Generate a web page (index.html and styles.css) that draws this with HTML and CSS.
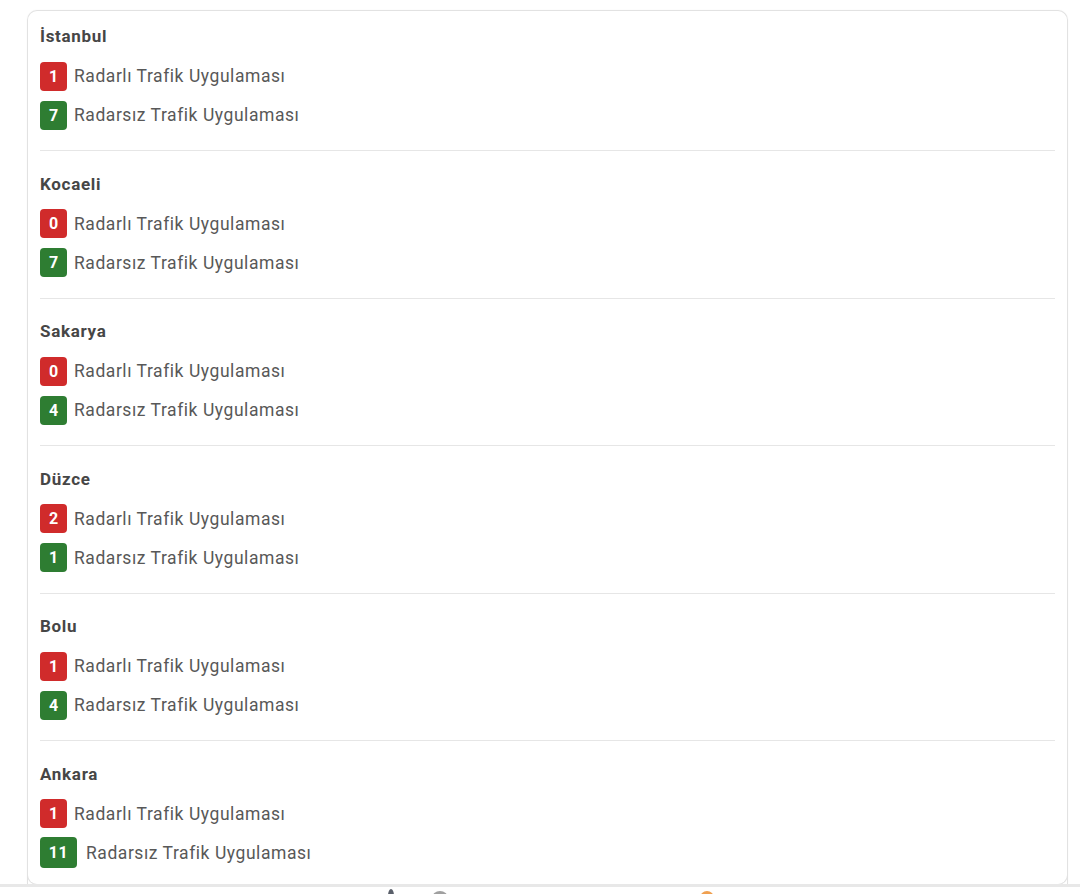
FILE: index.html
```html
<!DOCTYPE html>
<html lang="tr">
<head>
<meta charset="utf-8">
<title>Trafik Uygulamaları</title>
<link rel="stylesheet" href="styles.css">
</head>
<body>
<div class="page">
  <div class="card">
    <section class="city">
      <h3 class="city-name">İstanbul</h3>
      <div class="row"><span class="badge red">1</span><span class="label">Radarlı Trafik Uygulaması</span></div>
      <div class="row"><span class="badge green">7</span><span class="label">Radarsız Trafik Uygulaması</span></div>
    </section>
    <section class="city">
      <h3 class="city-name">Kocaeli</h3>
      <div class="row"><span class="badge red">0</span><span class="label">Radarlı Trafik Uygulaması</span></div>
      <div class="row"><span class="badge green">7</span><span class="label">Radarsız Trafik Uygulaması</span></div>
    </section>
    <section class="city">
      <h3 class="city-name">Sakarya</h3>
      <div class="row"><span class="badge red">0</span><span class="label">Radarlı Trafik Uygulaması</span></div>
      <div class="row"><span class="badge green">4</span><span class="label">Radarsız Trafik Uygulaması</span></div>
    </section>
    <section class="city">
      <h3 class="city-name">Düzce</h3>
      <div class="row"><span class="badge red">2</span><span class="label">Radarlı Trafik Uygulaması</span></div>
      <div class="row"><span class="badge green">1</span><span class="label">Radarsız Trafik Uygulaması</span></div>
    </section>
    <section class="city">
      <h3 class="city-name">Bolu</h3>
      <div class="row"><span class="badge red">1</span><span class="label">Radarlı Trafik Uygulaması</span></div>
      <div class="row"><span class="badge green">4</span><span class="label">Radarsız Trafik Uygulaması</span></div>
    </section>
    <section class="city">
      <h3 class="city-name">Ankara</h3>
      <div class="row"><span class="badge red">1</span><span class="label">Radarlı Trafik Uygulaması</span></div>
      <div class="row"><span class="badge green wide">11</span><span class="label">Radarsız Trafik Uygulaması</span></div>
    </section>
  </div>
</div>
<div class="footer">
  <span class="ficon dark"></span>
  <span class="ficon grey"></span>
  <span class="ficon orange"></span>
</div>
</body>
</html>
```

FILE: styles.css
```css
html, body {
  margin: 0;
  padding: 0;
  background: #ffffff;
}

body {
  font-family: Roboto, "Liberation Sans", Arial, sans-serif;
  color: #555555;
}

.page {
  padding: 10px 12px 0 27px;
}

.card {
  border: 1px solid #e2e2e2;
  border-bottom: none;
  border-radius: 10px 10px 0 0;
  padding: 15px 12px 16px 12px;
  box-shadow: 0 0 2px rgba(0, 0, 0, 0.04);
  position: relative;
}

.card::after {
  content: "";
  position: absolute;
  left: -1px;
  right: -1px;
  bottom: 0;
  height: 10px;
  border: 1px solid #e2e2e2;
  border-top: none;
  border-radius: 0 0 10px 10px;
  transform: translateY(1px);
}

.city {
  padding-bottom: 20px;
  border-bottom: 1px solid #e6e6e6;
  margin-bottom: 22.5px;
}

.city:last-child {
  padding-bottom: 0;
  border-bottom: none;
  margin-bottom: 0;
}

.city-name {
  margin: 0 0 15px 0;
  font-size: 17px;
  line-height: 20px;
  font-weight: 700;
  color: #464646;
  letter-spacing: 0.7px;
}

.row {
  display: flex;
  align-items: center;
  gap: 7px;
  height: 30px;
  margin-bottom: 9px;
}

.row:last-child {
  margin-bottom: 0;
}

.badge {
  display: inline-flex;
  align-items: center;
  justify-content: center;
  min-width: 27px;
  height: 29px;
  box-sizing: border-box;
  padding: 0 7px;
  border-radius: 4px;
  color: #ffffff;
  font-weight: 700;
  font-size: 16px;
}

.badge.wide {
  min-width: 37px;
  margin-right: 2px;
  height: 31px;
  letter-spacing: 0.5px;
}

.red {
  background: #d02b2b;
}

.green {
  background: #2e7d32;
}

.label {
  font-size: 17.5px;
  color: #585858;
  letter-spacing: 0.55px;
}

.footer {
  border-top: 3px solid #e8e8e8;
  margin-top: 0;
  height: 8px;
  position: relative;
  overflow: hidden;
}

.ficon {
  position: absolute;
  top: 2px;
  width: 14px;
  height: 14px;
  border-radius: 50%;
}

.ficon.dark {
  left: 388px;
  width: 6px;
  background: #5a5f6a;
}

.ficon.grey {
  left: 432px;
  width: 16px;
  top: 4px;
  background: #a0a0a0;
}

.ficon.orange {
  left: 700px;
  top: 4px;
  background: #f0a050;
}
```
